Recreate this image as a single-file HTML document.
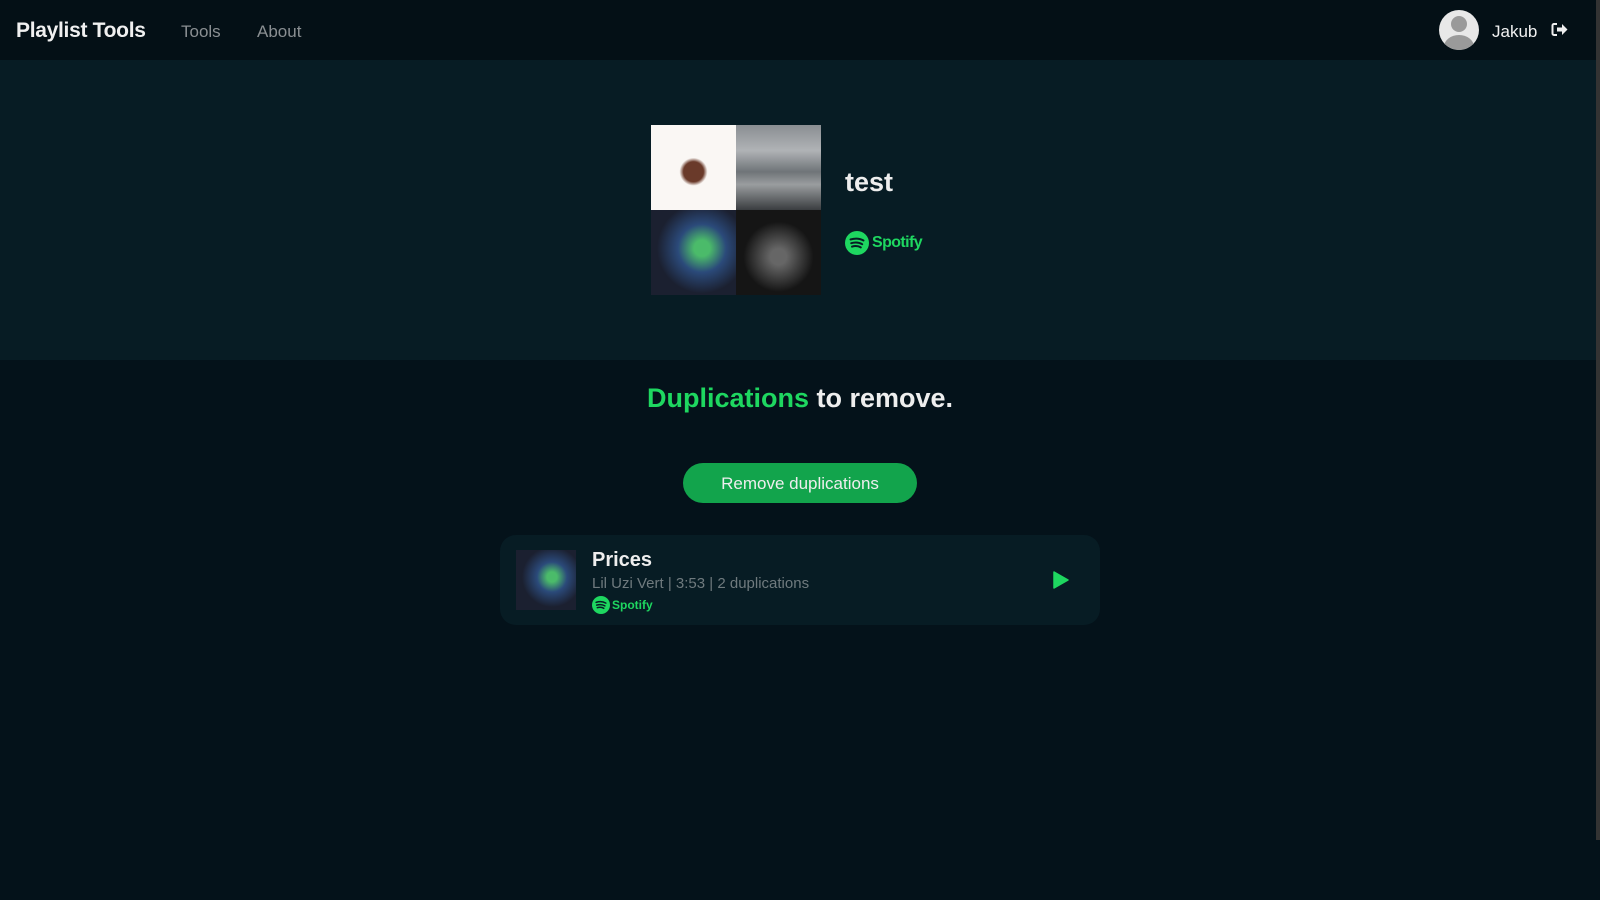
<!DOCTYPE html>
<html><head><meta charset="utf-8"><style>
*{margin:0;padding:0;box-sizing:border-box}
html,body{width:1600px;height:900px;overflow:hidden;background:#04121a;font-family:"Liberation Sans",sans-serif;color:#eee}
.nav{position:absolute;left:0;top:0;width:1600px;height:60px;background:#041016}
.brand{position:absolute;left:16px;top:19px;font-size:21px;font-weight:bold;color:#f0f0f0;letter-spacing:-0.3px}
.nl{position:absolute;top:22px;font-size:17px;color:#8a8f92}
.av{position:absolute;left:1439px;top:10px;width:40px;height:40px;border-radius:50%;background:#e8e8e8;overflow:hidden}
.av:before{content:"";position:absolute;left:12px;top:6px;width:16px;height:16px;border-radius:50%;background:#9a9a9a}
.av:after{content:"";position:absolute;left:5px;top:25px;width:30px;height:24px;border-radius:50%;background:#9a9a9a}
.user{position:absolute;left:1492px;top:22px;font-size:17px;color:#f0f0f0}
.hero{position:absolute;left:0;top:60px;width:1600px;height:300px;background:#071c24}
.grid{position:absolute;left:651px;top:125px;width:170px;height:170px}
.grid div{position:absolute;width:85px;height:85px}
.t{position:absolute;left:845px;top:167px;font-size:27px;font-weight:bold;color:#eee}
.h2{position:absolute;left:0;width:1600px;top:383px;text-align:center;font-size:27px;font-weight:bold;color:#eee}
.btn{position:absolute;left:683px;top:463px;width:234px;height:40px;border-radius:20px;background:#12a44c;color:#eee;font-size:17px;text-align:center;line-height:42px}
.card{position:absolute;left:500px;top:535px;width:600px;height:90px;border-radius:16px;background:#071c24}
.sb{position:absolute;left:1596px;top:0;width:4px;height:840px;background:#333}
</style></head><body>
<div class="nav">
<div class="brand">Playlist Tools</div>
<div class="nl" style="left:181px">Tools</div>
<div class="nl" style="left:257px">About</div>
<div class="av"></div>
<div class="user">Jakub</div>
<svg style="position:absolute;left:1551px;top:22px" width="17" height="15" viewBox="0 0 17 15"><path d="M6 2H3a1.5 1.5 0 0 0-1.5 1.5v8A1.5 1.5 0 0 0 3 13h3" fill="none" stroke="#eee" stroke-width="2"/><path d="M6 5.5h5V2l5.5 5.5L11 13V9.5H6z" fill="#eee"/></svg>
</div>
<div class="hero"></div>
<div class="grid">
<div style="left:0;top:0;background:radial-gradient(circle at 50% 55%,#6a3a2a 0 10px,#faf7f4 14px)"></div>
<div style="left:85px;top:0;background:linear-gradient(#8a8e92,#b0b3b6 30%,#6f7478 55%,#9a9d9f 70%,#3a3d40)"></div>
<div style="left:0;top:85px;background:radial-gradient(circle at 60% 45%,#4bbb6a 0 8px,#2b4a7a 24px,#1b2030 45px)"></div>
<div style="left:85px;top:85px;background:radial-gradient(circle at 50% 55%,#666 0 8px,#151515 35px)"></div>
</div>
<div class="t">test</div>
<div style="position:absolute;left:845px;top:231px;display:flex;align-items:center">
<svg width="24" height="24" viewBox="0 0 24 24"><circle cx="12" cy="12" r="12" fill="#1ed760"/><path d="M5.5 8.5c4.5-1.4 9.5-1 13 1M6.2 12.2c3.8-1.1 8-.8 11 1M7 15.6c3.2-.9 6.4-.6 8.8.8" fill="none" stroke="#071c24" stroke-width="2" stroke-linecap="round"/></svg>
<span style="margin-left:3px;font-size:16px;font-weight:bold;color:#1ed760;letter-spacing:-0.6px">Spotify</span></div>
<div class="h2"><span style="color:#1ed760">Duplications</span> to remove.</div>
<div class="btn">Remove duplications</div>
<div class="card">
<div style="position:absolute;left:16px;top:15px;width:60px;height:60px;background:radial-gradient(circle at 60% 45%,#4bbb6a 0 5px,#2b4a7a 15px,#1b2030 30px)"></div>
<div style="position:absolute;left:92px;top:14px;font-size:20px;font-weight:bold;color:#eee">Prices</div>
<div style="position:absolute;left:92px;top:40px;font-size:15px;color:#6f7a7e">Lil Uzi Vert | 3:53 | 2 duplications</div>
<div style="position:absolute;left:92px;top:61px;display:flex;align-items:center">
<svg width="18" height="18" viewBox="0 0 24 24"><circle cx="12" cy="12" r="12" fill="#1ed760"/><path d="M5.5 8.5c4.5-1.4 9.5-1 13 1M6.2 12.2c3.8-1.1 8-.8 11 1M7 15.6c3.2-.9 6.4-.6 8.8.8" fill="none" stroke="#071c24" stroke-width="2" stroke-linecap="round"/></svg>
<span style="margin-left:2px;font-size:12px;font-weight:bold;color:#1ed760">Spotify</span></div>
<svg style="position:absolute;left:553px;top:36px" width="16" height="18" viewBox="0 0 16 18"><path d="M1 1L15 9L1 17Z" fill="#1ed760" stroke="#1ed760" stroke-linejoin="round" stroke-width="1.5"/></svg>
</div>
<div class="sb"></div>
</body></html>
